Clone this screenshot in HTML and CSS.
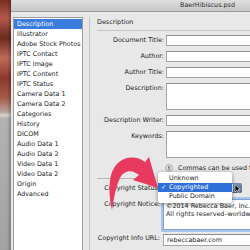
FILE: index.html
```html
<!DOCTYPE html>
<html lang="en">
<head>
    <meta charset="UTF-8">
    <title>BaerHibiscus.psd - File Info</title>
    <link rel="stylesheet" href="styles.css">
</head>
<body>

    <!-- Desktop photo peeking out on the left -->
    <div class="desktop"></div>

    <div class="window">
        <div class="titlebar">BaerHibiscus.psd</div>

        <div class="content">
            <ul class="list">
                <li class="selected">Description</li>
                <li>Illustrator</li>
                <li>Adobe Stock Photos</li>
                <li>IPTC Contact</li>
                <li>IPTC Image</li>
                <li>IPTC Content</li>
                <li>IPTC Status</li>
                <li>Camera Data 1</li>
                <li>Camera Data 2</li>
                <li>Categories</li>
                <li>History</li>
                <li>DICOM</li>
                <li>Audio Data 1</li>
                <li>Audio Data 2</li>
                <li>Video Data 1</li>
                <li>Video Data 2</li>
                <li>Origin</li>
                <li>Advanced</li>
            </ul>

            <div class="panel">
                <div class="panel-title">Description</div>

                <div class="form">
                    <label>Document Title:</label>
                    <div class="field"></div>
                    <label>Author:</label>
                    <div class="field"></div>
                    <label>Author Title:</label>
                    <div class="field"></div>
                    <label>Description:</label>
                    <div class="field area"></div>
                    <label>Description Writer:</label>
                    <div class="field"></div>
                    <label>Keywords:</label>
                    <div class="field area"></div>
                </div>

                <div class="hint">
                    <span class="hint-icon">!</span>
                    <span>Commas can be used to separate keywords</span>
                </div>

                <div class="separator"></div>

                <div class="form lower">
                    <label>Copyright Status:</label>
                    <div class="select-wrap">
                        <div class="select">
                            <span class="select-btn">
                                <svg width="7" height="9" viewBox="0 0 7 9"><path d="M1 0.5 L1 8 L2.8 6.2 L4 8.6 L5.2 8 L4 5.6 L6.4 5.6 Z" fill="#000" stroke="#fff" stroke-width="0.6"/></svg>
                            </span>
                        </div>
                        <ul class="menu">
                            <li>Unknown</li>
                            <li class="active"><span class="check">✓</span>Copyrighted</li>
                            <li>Public Domain</li>
                        </ul>
                    </div>
                    <label class="top">Copyright Notice:</label>
                    <div class="field notice">©2014 Rebecca Baer, Inc.<br>All rights reserved–worldwide</div>
                    <label>Copyright Info URL:</label>
                    <div class="field url">rebeccabaer.com</div>
                </div>
            </div>
        </div>
    </div>

    <!-- Annotation arrow pointing at the menu -->
    <svg class="arrow" width="250" height="250" viewBox="0 0 250 250">
        <path d="M112,210 C108,192 108,172 118,163 C126,156 137,156 145,162 L149,157 L158,188 L133,180 L139,175 C132,169 124,170 120,178 C116,186 114,198 112,210 Z" fill="#e83a5e"/>
    </svg>

</body>
</html>
```

FILE: styles.css
```css
/* Page */
body {
    margin: 0;
    width: 250px;
    height: 250px;
    overflow: hidden;
    display: flex;
    position: relative;
    font-family: "DejaVu Sans", "Liberation Sans", sans-serif;
    font-size: 6.4px;
    color: #1c1c1c;
}

/* Desktop strip */
.desktop {
    width: 11px;
    flex-shrink: 0;
    background:
        linear-gradient(to right, transparent 7px, rgba(0, 0, 0, 0.25) 11px),
        linear-gradient(to bottom, #7a2e22 0, #b2584a 18px, #6b2a1f 38px, #c06a5a 58px, #8a3a2c 78px, #a85a48 98px, #b8a49c 112px, #d6d2ce 115px, #b2b2b2 119px, #a2a2a2 250px);
}

/* Window */
.window {
    flex: 1;
    display: flex;
    flex-direction: column;
    background: #e8e8e8;
}
.titlebar {
    height: 11px;
    line-height: 11px;
    padding-left: 169px;
    background: linear-gradient(to bottom, #dedede, #c6c6c6);
    border-bottom: 1px solid #9e9e9e;
    color: #2e2e2e;
    white-space: nowrap;
}
.content {
    flex: 1;
    display: flex;
    padding: 5px 0 0 2px;
    min-height: 0;
}

/* Category list */
.list {
    list-style: none;
    margin: 0;
    padding: 1px 0 0;
    width: 68px;
    flex-shrink: 0;
    background: #fff;
    border: 1px solid #9c9c9c;
    border-bottom: none;
}
.list li {
    height: 10px;
    line-height: 10px;
    padding-left: 3px;
    white-space: nowrap;
}
.list li.selected {
    background: #3b7ddd;
    color: #fff;
}

/* Right panel */
.panel {
    flex: 1;
    margin-left: 6px;
    border-left: 1px solid #c4c4c4;
    padding-left: 7px;
    min-width: 0;
}
.panel-title {
    height: 13px;
    line-height: 10px;
    border-bottom: 1px solid #c6c6c6;
}

/* Form rows */
.form {
    display: grid;
    grid-template-columns: 67px 1fr;
    column-gap: 2px;
    row-gap: 5px;
    margin-top: 4px;
}
.form label {
    text-align: right;
    line-height: 11px;
    white-space: nowrap;
}
.field {
    height: 11px;
    background: #fff;
    border: 1px solid #a4a4a4;
    border-top-color: #8c8c8c;
    box-sizing: border-box;
}
.field.area {
    height: 27px;
}

/* Hint line */
.hint {
    display: flex;
    align-items: center;
    gap: 5px;
    margin: 5px 0 0 68px;
    height: 10px;
    white-space: nowrap;
}
.hint-icon {
    width: 8px;
    height: 8px;
    border-radius: 50%;
    background: #dadada;
    border: 1px solid #b4b4b4;
    box-sizing: border-box;
    font-size: 5px;
    font-weight: bold;
    line-height: 6px;
    text-align: center;
}

.separator {
    width: 58px;
    height: 1px;
    margin-top: 5px;
    background: #b8b8b8;
}

/* Copyright section */
.form.lower {
    grid-template-columns: 63px 1fr;
    column-gap: 3px;
    row-gap: 3px;
    margin-top: 4px;
}
.form.lower label {
    line-height: 10px;
}
.form.lower label.top {
    padding-top: 3px;
}
.select-wrap {
    position: relative;
    height: 10px;
}
.select {
    width: 79px;
    height: 10px;
    background: #fff;
    border: 1px solid #a4a4a4;
    box-sizing: border-box;
    border-radius: 2px;
    display: flex;
    justify-content: flex-end;
}
.select-btn {
    width: 9px;
    height: 10px;
    margin: -1px -1px 0 0;
    border-radius: 0 2px 2px 0;
    background: linear-gradient(to bottom, #7890b4, #4a6288);
    display: flex;
    justify-content: center;
    align-items: center;
}
.menu {
    position: absolute;
    left: -5px;
    top: -11px;
    width: 74px;
    margin: 0;
    padding: 2px 0;
    list-style: none;
    background: rgba(255, 255, 255, 0.97);
    border-radius: 3px;
    box-shadow: 0 1px 4px rgba(0, 0, 0, 0.45);
    z-index: 2;
}
.menu li {
    position: relative;
    height: 9px;
    line-height: 9px;
    padding-left: 11px;
    white-space: nowrap;
}
.menu li.active {
    background: #2f6fd8;
    color: #fff;
}
.check {
    position: absolute;
    left: 3px;
}
.field.notice {
    height: 31px;
    margin-top: 3px;
    padding: 2px 0 0 2px;
    line-height: 8px;
    border-color: #7f9fd0;
    box-shadow: 0 0 0 2px #a9c5ec;
    white-space: nowrap;
    overflow: hidden;
}
.field.url {
    height: 12px;
    margin-top: 1px;
    padding-left: 3px;
    line-height: 11px;
    white-space: nowrap;
}

/* Annotation */
.arrow {
    position: absolute;
    left: 0;
    top: 0;
    pointer-events: none;
    z-index: 3;
}
```
